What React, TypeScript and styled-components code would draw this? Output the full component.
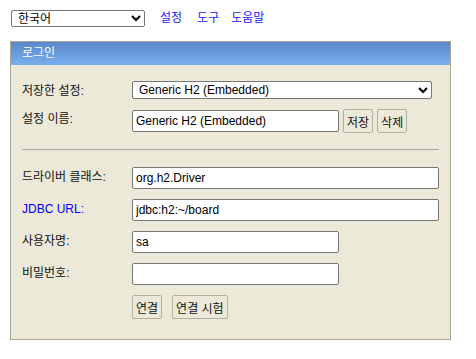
import React from "react"
import styled, { createGlobalStyle } from "styled-components"

const GlobalStyle = createGlobalStyle`
  html, body {
    margin: 0;
    padding: 0;
    background: #ffffff;
  }
  body {
    font-family: "Liberation Sans", "Noto Sans CJK KR", sans-serif;
    font-size: 12px;
    color: #000;
  }
`

const Page = styled.div`
  padding: 10px 10px;
`

const TopBar = styled.div`
  display: flex;
  align-items: center;
  height: 17px;
  padding-left: 1px;
`

const LangSelect = styled.select`
  width: 134px;
  height: 17px;
  font-family: "Liberation Sans", "Noto Sans CJK KR", sans-serif;
  font-size: 12px;
  padding: 0 0 0 2px;
  border: 1px solid #767676;
  border-radius: 2px;
  background: #fff;
  color: #000;
`

const TopLink = styled.a<{ $gap: number }>`
  margin-left: ${(p) => p.$gap}px;
  color: #1a1aff;
  text-decoration: none;
  font-size: 12px;
  line-height: 17px;
`

const Panel = styled.div`
  margin-top: 14px;
  width: 439px;
  border: 1px solid #aaa797;
  background: #ece9d8;
`

const PanelHeader = styled.div`
  height: 23px;
  line-height: 22px;
  padding-left: 11px;
  color: #fff;
  font-size: 12px;
  background: linear-gradient(#5a87c7, #7ab0f0);
`

const PanelBody = styled.div`
  padding: 16px 11px 20px 11px;
`

const Row = styled.div<{ $top?: number }>`
  display: grid;
  grid-template-columns: 110px 1fr;
  align-items: start;
  margin-top: ${(p) => p.$top ?? 0}px;
`

const Label = styled.div<{ $link?: boolean }>`
  padding-top: 2px;
  line-height: 16px;
  color: ${(p) => (p.$link ? "#0000ff" : "#111")};
`

const Controls = styled.div`
  display: flex;
  align-items: center;
  gap: 4px;
`

const Select = styled.select`
  width: 300px;
  height: 18px;
  font-family: "Liberation Sans", "Noto Sans CJK KR", sans-serif;
  font-size: 12px;
  padding: 0 0 0 2px;
  border: 1px solid #767676;
  border-radius: 2px;
  background: #fff;
  color: #000;
`

const Input = styled.input<{ $w: number }>`
  box-sizing: border-box;
  width: ${(p) => p.$w}px;
  height: 22px;
  padding: 0 3px;
  font-family: "Liberation Sans", "Noto Sans CJK KR", sans-serif;
  font-size: 12px;
  border: 1px solid #767676;
  border-radius: 2px;
  background: #fff;
  color: #000;
  outline: none;
`

const Button = styled.button`
  box-sizing: border-box;
  height: 24px;
  padding: 0 3px;
  font-family: "Liberation Sans", "Noto Sans CJK KR", sans-serif;
  font-size: 12px;
  color: #111;
  background: #ece9d8;
  border: 1px solid #b3b0a3;
  border-radius: 2px;
`

const Divider = styled.div`
  height: 1px;
  background: #a7a7a7;
  margin: 16px 0 17px;
`

const ButtonRow = styled(Controls)`
  gap: 10px;
`

export default function App() {
  return (
    <Page>
      <GlobalStyle />
      <TopBar>
        <LangSelect defaultValue="ko">
          <option value="ko">한국어</option>
        </LangSelect>
        <TopLink href="#" $gap={15}>설정</TopLink>
        <TopLink href="#" $gap={15}>도구</TopLink>
        <TopLink href="#" $gap={12}>도움말</TopLink>
      </TopBar>
      <Panel>
        <PanelHeader>로그인</PanelHeader>
        <PanelBody>
          <Row>
            <Label>저장한 설정:</Label>
            <Select defaultValue="h2">
              <option value="h2">Generic H2 (Embedded)</option>
            </Select>
          </Row>
          <Row $top={10}>
            <Label>설정 이름:</Label>
            <Controls>
              <Input $w={207} defaultValue="Generic H2 (Embedded)" />
              <Button>저장</Button>
              <Button>삭제</Button>
            </Controls>
          </Row>
          <Divider />
          <Row>
            <Label>드라이버 클래스:</Label>
            <Input $w={307} defaultValue="org.h2.Driver" />
          </Row>
          <Row $top={10}>
            <Label $link>JDBC URL:</Label>
            <Input $w={307} defaultValue="jdbc:h2:~/board" />
          </Row>
          <Row $top={10}>
            <Label>사용자명:</Label>
            <Input $w={207} defaultValue="sa" />
          </Row>
          <Row $top={10}>
            <Label>비밀번호:</Label>
            <Input $w={207} type="password" defaultValue="" />
          </Row>
          <Row $top={10}>
            <div />
            <ButtonRow>
              <Button>연결</Button>
              <Button>연결 시험</Button>
            </ButtonRow>
          </Row>
        </PanelBody>
      </Panel>
    </Page>
  )
}
